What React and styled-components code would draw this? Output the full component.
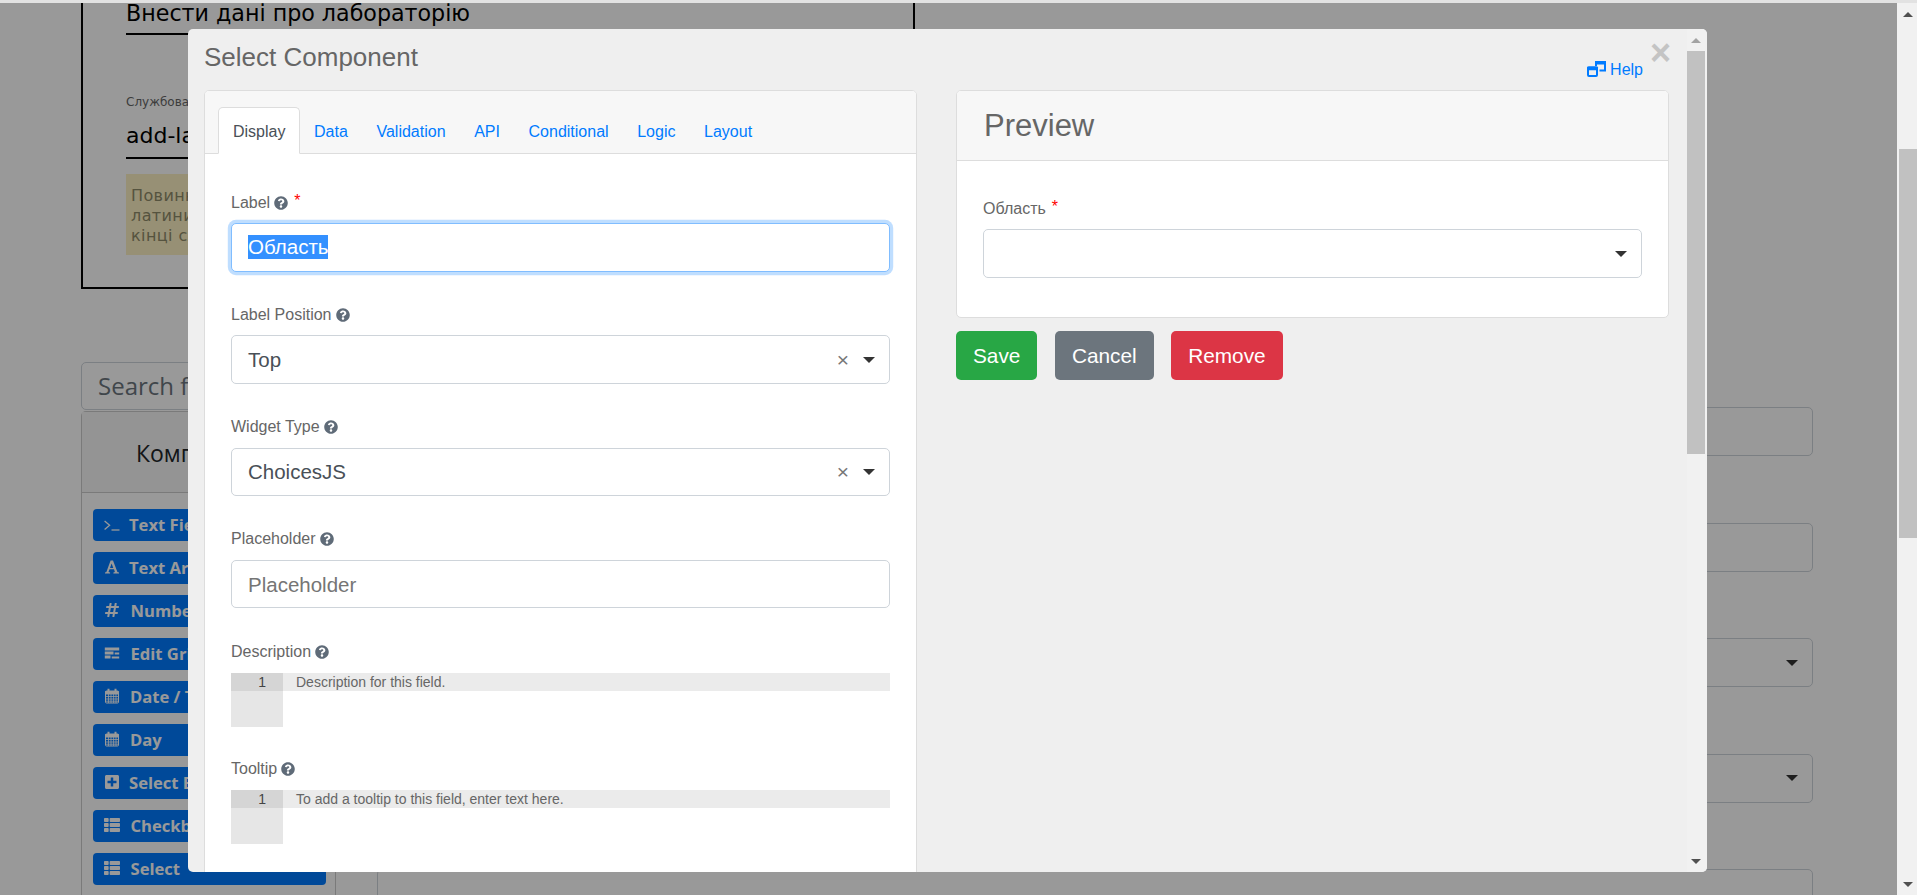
import React from 'react';
import styled, { createGlobalStyle } from 'styled-components';
import { FaHashtag, FaPlusSquare, FaThList, FaQuestionCircle } from 'react-icons/fa';

const GlobalStyle = createGlobalStyle`
  html, body {
    margin: 0;
    padding: 0;
    height: 100%;
    overflow: hidden;
  }
  body {
    font-family: "Liberation Sans", Arial, sans-serif;
    background: #fff;
  }
  * {
    box-sizing: border-box;
  }
`;

// Page shell
const Shell = styled.div`
  position: relative;
  width: 1917px;
  height: 895px;
  overflow: hidden;
  border-top: 3px solid #e2e2e2;
  display: flex;
`;

const PageArea = styled.div`
  position: relative;
  flex: 1;
  height: 100%;
  overflow: hidden;
  padding: 0 84px 0 81px;
  background: #fff;
`;

const Scrollbar = styled.div`
  width: ${props => props.$width}px;
  height: 100%;
  background: #f1f1f1;
  display: flex;
  flex-direction: column;
  align-items: stretch;
  padding-left: ${props => props.$padLeft || 0}px;
  padding-right: ${props => props.$padRight || 0}px;
  flex-shrink: 0;
`;

const ScrollArrow = styled.div`
  height: ${props => props.$space}px;
  display: flex;
  align-items: center;
  justify-content: center;
  flex-shrink: 0;
  &::after {
    content: '';
    border-left: 5px solid transparent;
    border-right: 5px solid transparent;
    ${props => props.$up ? 'border-bottom' : 'border-top'}: 5px solid ${props => props.$color};
  }
`;

const ScrollThumb = styled.div`
  height: ${props => props.$height}px;
  background: #c1c1c1;
  flex-shrink: 0;
  margin-top: ${props => props.$offset}px;
`;

const ScrollSpacer = styled.div`
  flex: 1;
`;

// Page behind the dialog
const FormCard = styled.section`
  width: 834px;
  height: 286px;
  border: 2px solid #000;
  border-top: none;
  padding-left: 43px;
  margin-bottom: 73px;
`;

const LabName = styled.div`
  font-family: "DejaVu Sans", Verdana, sans-serif;
  font-size: 22.2px;
  line-height: 20px;
  color: #000;
  height: 32px;
  border-bottom: 2px solid #000;
  width: 500px;
`;

const FieldCaption = styled.div`
  font-family: "DejaVu Sans", Verdana, sans-serif;
  font-size: 12px;
  line-height: 16px;
  color: #666;
  margin-top: 59px;
`;

const SlugInput = styled.div`
  font-family: "DejaVu Sans", Verdana, sans-serif;
  font-size: 22px;
  line-height: 32px;
  color: #000;
  height: 49px;
  padding-top: 10px;
  border-bottom: 2px solid #000;
  width: 500px;
`;

const Hint = styled.div`
  font-family: "DejaVu Sans", Verdana, sans-serif;
  font-size: 16px;
  line-height: 20px;
  letter-spacing: 0.4px;
  white-space: nowrap;
  color: #8e8a69;
  background: #fcf0c3;
  margin-top: 15px;
  padding: 12px 5px;
  width: 300px;
  height: 81px;
`;

const Builder = styled.div`
  display: grid;
  grid-template-columns: 255px 1fr;
  column-gap: 41px;
`;

const SearchBox = styled.div`
  height: 48px;
  border: 1px solid #ced4da;
  border-radius: 5px;
  font-family: "Open Sans", sans-serif;
  font-size: 24px;
  line-height: 46px;
  padding-left: 16px;
  color: #6c757d;
  margin-bottom: 1px;
  white-space: nowrap;
  overflow: hidden;
`;

const SideCard = styled.div`
  border: 1px solid #ccc;
  border-bottom: none;
  border-radius: 5px 5px 0 0;
  height: 500px;
`;

const SideHeader = styled.div`
  height: 81px;
  background: #f7f7f7;
  border-bottom: 1px solid #ccc;
  font-family: "Open Sans", sans-serif;
  font-size: 23px;
  line-height: 82px;
  padding-left: 54px;
  color: #212529;
`;

const SideList = styled.div`
  display: flex;
  flex-direction: column;
  gap: 11px;
  padding: 16px 9px 0 11px;
`;

const SideButton = styled.div`
  height: 32px;
  background: #007bff;
  color: #fff;
  border-radius: 4px;
  display: flex;
  align-items: center;
  padding: 0 0 2px 11px;
  font-family: "Open Sans", sans-serif;
  font-weight: 700;
  font-size: 16.6px;
  white-space: nowrap;
`;

const IconSlot = styled.span`
  width: ${props => props.$width}px;
  flex-shrink: 0;
  display: flex;
  align-items: center;
  svg {
    width: 16px;
    height: 16px;
    display: block;
  }
`;

const FieldColumn = styled.div`
  display: flex;
  flex-direction: column;
  gap: 66.5px;
  padding-top: 45px;
`;

const PageInput = styled.div`
  position: relative;
  height: 49px;
  flex-shrink: 0;
  border: 1px solid #ced4da;
  border-radius: 5px;
  display: flex;
  align-items: center;
  justify-content: flex-end;
  padding-right: 14px;
`;

const Caret = styled.span`
  display: inline-block;
  border-left: 6.5px solid transparent;
  border-right: 6.5px solid transparent;
  border-top: 6.5px solid #333;
`;

// Dialog
const Backdrop = styled.div`
  position: absolute;
  inset: 0;
  background: rgba(0, 0, 0, 0.4);
`;

const Modal = styled.div`
  position: absolute;
  left: 188px;
  top: 26px;
  width: 1519px;
  height: 843px;
  background: #efefef;
  border-radius: 5px;
  overflow: hidden;
  display: flex;
`;

const ModalContent = styled.div`
  flex: 1;
  min-width: 0;
  padding: 0 18px 0 16px;
  overflow: hidden;
`;

const ModalHeader = styled.div`
  height: 61px;
  position: relative;
`;

const ModalTitle = styled.h4`
  margin: 0;
  font-size: 26px;
  font-weight: 400;
  line-height: 36px;
  padding-top: 10px;
  color: #666;
`;

const HelpLink = styled.a`
  position: absolute;
  right: 26px;
  top: 29px;
  display: flex;
  align-items: center;
  gap: 4px;
  font-size: 16px;
  line-height: 24px;
  color: #007bff;
  text-decoration: none;
  svg {
    width: 19px;
    height: 16px;
    margin-top: -2px;
  }
`;

const CloseButton = styled.span`
  position: absolute;
  right: -2px;
  top: 6px;
  font-size: 36px;
  font-weight: 700;
  line-height: 36px;
  color: #c4c4c4;
`;

const Columns = styled.div`
  display: grid;
  grid-template-columns: 713px 713px;
  column-gap: 39px;
  align-items: start;
`;

const Panel = styled.div`
  background: #fff;
  border: 1px solid #ddd;
  border-radius: 5px;
  overflow: hidden;
`;

const TabBar = styled.div`
  height: 63px;
  background: #f7f7f7;
  border-bottom: 1px solid #ddd;
  display: flex;
  align-items: flex-end;
  padding-left: 13px;
`;

const Tab = styled.a`
  height: 47px;
  margin-bottom: -1px;
  padding: 2px 13.3px 0 ${props => props.$active ? 14 : 13.3}px;
  display: flex;
  align-items: center;
  font-size: 16px;
  color: ${props => props.$active ? '#495057' : '#007bff'};
  background: ${props => props.$active ? '#fff' : 'transparent'};
  border: 1px solid ${props => props.$active ? '#ddd' : 'transparent'};
  border-bottom-color: ${props => props.$active ? '#fff' : 'transparent'};
  border-radius: 5px 5px 0 0;
`;

const PanelBody = styled.div`
  padding: 36px 26px 0;
  height: 800px;
`;

const FieldGroup = styled.div`
  margin-bottom: ${props => props.$mb || 30.83}px;
`;

const Label = styled.label`
  display: flex;
  align-items: center;
  gap: 4px;
  height: 24px;
  padding-top: 1px;
  margin-bottom: ${props => props.$gap || 9}px;
  font-size: 16px;
  line-height: 24px;
  color: #666;
`;

const Required = styled.span`
  color: #f00;
  font-size: 16px;
  margin-left: 2px;
  margin-top: -3px;
`;

const HelpIcon = styled(FaQuestionCircle)`
  width: 14px;
  height: 14px;
  color: #5f6b78;
`;

const TextBox = styled.div`
  height: 48.5px;
  border: 1px solid ${props => props.$focused ? '#80bdff' : '#ced4da'};
  border-radius: 5px;
  background: #fff;
  padding: ${props => props.$focused ? 0 : 1}px 14px 0 16px;
  display: flex;
  align-items: center;
  font-size: 20.5px;
  color: ${props => props.$muted ? '#757575' : '#495057'};
  ${props => props.$focused ? 'box-shadow: 0 0 0 3.2px rgba(0, 123, 255, 0.25);' : ''}
`;

const SelectedText = styled.span`
  background: #3390ff;
  color: #fff;
  line-height: 24px;
`;

const SelectValue = styled.span`
  flex: 1;
`;

const ClearMark = styled.span`
  font-size: 21px;
  color: #777;
  margin-right: 14px;
`;

const Editor = styled.div`
  display: flex;
  height: 54px;
  background: #fff;
  font-size: 14px;
  line-height: 18px;
  color: #666;
`;

const Gutter = styled.div`
  width: 52px;
  background: #e6e6e6;
`;

const GutterLine = styled.div`
  height: 18px;
  background: #d5d5d5;
  color: #444;
  padding-right: 17px;
  text-align: right;
`;

const EditorLine = styled.div`
  flex: 1;
  height: 18px;
  background: #ebebeb;
  padding-left: 13px;
`;

const PreviewHeader = styled.div`
  height: 70px;
  background: #f7f7f7;
  border-bottom: 1px solid #ddd;
  padding-left: 27px;
  font-size: 31px;
  line-height: 70px;
  color: #666;
`;

const PreviewBody = styled.div`
  padding: 35px 26px 39.5px;
`;

const ButtonRow = styled.div`
  display: flex;
  gap: 17.5px;
  margin-top: 13px;
`;

const ActionButton = styled.button`
  height: 49px;
  border: none;
  border-radius: 5px;
  padding: 0 17px;
  background: ${props => props.$color};
  color: #fff;
  font-family: inherit;
  font-size: 20.8px;
`;

// Icons the packages have no close match for
const WindowRestoreIcon = () => (
  <svg viewBox="0 0 19 16" fill="currentColor">
    <path d="M9 5V1h9v8.5h-5.5" fill="none" stroke="currentColor" strokeWidth="2" />
    <rect x="8" y="0" width="11" height="3.4" rx="1" />
    <rect x="1" y="6.5" width="9" height="8.5" rx="1" fill="none" stroke="currentColor" strokeWidth="2" />
    <rect x="0" y="5.5" width="11" height="3.8" rx="1" />
  </svg>
);

const TerminalIcon = () => (
  <svg viewBox="0 0 16 16" fill="none" stroke="currentColor" strokeWidth="1.3">
    <path d="M0.6 5l5 4.3-5 4.3" />
    <path d="M7.5 14h8" />
  </svg>
);

const FontIcon = () => (
  <svg viewBox="0 0 16 16" fill="currentColor" fillRule="evenodd">
    <path d="M6.6 1.5h2.4l4.4 11.5 1.6.4v1h-5.6v-1l1.5-.4-.9-2.7H5.5l-1 2.7 1.6.4v1H1v-1l1.4-.4zM7.6 4.4L6 9.1h3.3z" />
  </svg>
);

const TasksIcon = () => (
  <svg viewBox="0 0 16 16" fill="currentColor">
    <path d="M0.8 2.5h14.4v3h-14.4z" />
    <path d="M0.8 6.5h8.7v3h-8.7zM10.7 7.5h4.5v2h-4.5z" />
    <path d="M0.8 10.5h5.7v3h-5.7zM7.7 11.5h7.5v2h-7.5z" />
  </svg>
);

const CalendarIcon = () => (
  <svg viewBox="0 0 16 16" fill="none" stroke="currentColor" strokeWidth="1">
    <rect x="1.5" y="3" width="13" height="12" rx="1" />
    <path d="M1.5 3.5h13v2.5h-13z" fill="currentColor" />
    <path d="M1.5 8.5h13M1.5 11h13M1.5 13.2h13M4.5 6v9M7 6v9M9.6 6v9M12 6v9" strokeWidth="0.8" />
    <path d="M4.5 0.8v3M11.5 0.8v3" strokeWidth="2" />
  </svg>
);

const sideItems = [
  { icon: TerminalIcon, label: 'Text Field', slot: 25 },
  { icon: FontIcon, label: 'Text Area', slot: 25 },
  { icon: FaHashtag, label: 'Number', slot: 26.5 },
  { icon: TasksIcon, label: 'Edit Grid', slot: 26.5 },
  { icon: CalendarIcon, label: 'Date / Time', slot: 26 },
  { icon: CalendarIcon, label: 'Day', slot: 26 },
  { icon: FaPlusSquare, label: 'Select Boxes', slot: 25 },
  { icon: FaThList, label: 'Checkbox', slot: 26.5 },
  { icon: FaThList, label: 'Select', slot: 26.5 },
];

const tabs = ['Display', 'Data', 'Validation', 'API', 'Conditional', 'Logic', 'Layout'];

const App = () => (
  <>
    <GlobalStyle />
    <Shell>
      <PageArea>
        <FormCard>
          <LabName>Внести дані про лабораторію</LabName>
          <FieldCaption>Службова назва</FieldCaption>
          <SlugInput>add-laboratory</SlugInput>
          <Hint>
            Повинна містити лише символи<br />
            латиниці, без пробілів, а в<br />
            кінці слова
          </Hint>
        </FormCard>
        <Builder>
          <div>
            <SearchBox>Search field(s)</SearchBox>
            <SideCard>
              <SideHeader>Компоненти</SideHeader>
              <SideList>
                {sideItems.map(({ icon: Icon, label, slot }) => (
                  <SideButton key={label}>
                    <IconSlot $width={slot}><Icon /></IconSlot>
                    {label}
                  </SideButton>
                ))}
              </SideList>
            </SideCard>
          </div>
          <FieldColumn>
            <PageInput />
            <PageInput />
            <PageInput><Caret /></PageInput>
            <PageInput><Caret /></PageInput>
            <PageInput />
          </FieldColumn>
        </Builder>
        <Backdrop />
        <Modal>
          <ModalContent>
            <ModalHeader>
              <ModalTitle>Select Component</ModalTitle>
              <HelpLink><WindowRestoreIcon />Help</HelpLink>
              <CloseButton>×</CloseButton>
            </ModalHeader>
            <Columns>
              <Panel>
                <TabBar>
                  {tabs.map(tab => (
                    <Tab key={tab} $active={tab === 'Display'}>{tab}</Tab>
                  ))}
                </TabBar>
                <PanelBody>
                  <FieldGroup>
                    <Label>Label <HelpIcon /><Required>*</Required></Label>
                    <TextBox $focused><SelectedText>Область</SelectedText></TextBox>
                  </FieldGroup>
                  <FieldGroup>
                    <Label>Label Position <HelpIcon /></Label>
                    <TextBox>
                      <SelectValue>Top</SelectValue>
                      <ClearMark>×</ClearMark>
                      <Caret />
                    </TextBox>
                  </FieldGroup>
                  <FieldGroup>
                    <Label>Widget Type <HelpIcon /></Label>
                    <TextBox>
                      <SelectValue>ChoicesJS</SelectValue>
                      <ClearMark>×</ClearMark>
                      <Caret />
                    </TextBox>
                  </FieldGroup>
                  <FieldGroup>
                    <Label>Placeholder <HelpIcon /></Label>
                    <TextBox $muted>Placeholder</TextBox>
                  </FieldGroup>
                  <FieldGroup $mb={29.67}>
                    <Label $gap={10}>Description <HelpIcon /></Label>
                    <Editor>
                      <Gutter><GutterLine>1</GutterLine></Gutter>
                      <EditorLine>Description for this field.</EditorLine>
                    </Editor>
                  </FieldGroup>
                  <FieldGroup>
                    <Label>Tooltip <HelpIcon /></Label>
                    <Editor>
                      <Gutter><GutterLine>1</GutterLine></Gutter>
                      <EditorLine>To add a tooltip to this field, enter text here.</EditorLine>
                    </Editor>
                  </FieldGroup>
                </PanelBody>
              </Panel>
              <div>
                <Panel>
                  <PreviewHeader>Preview</PreviewHeader>
                  <PreviewBody>
                    <Label>Область <Required>*</Required></Label>
                    <TextBox>
                      <SelectValue />
                      <Caret />
                    </TextBox>
                  </PreviewBody>
                </Panel>
                <ButtonRow>
                  <ActionButton $color="#28a745">Save</ActionButton>
                  <ActionButton $color="#6c757d">Cancel</ActionButton>
                  <ActionButton $color="#dc3545">Remove</ActionButton>
                </ButtonRow>
              </div>
            </Columns>
          </ModalContent>
          <Scrollbar $width={20} $padRight={2}>
            <ScrollArrow $up $space={22} $color="#a3a3a3" />
            <ScrollThumb $offset={0} $height={403} />
            <ScrollSpacer />
            <ScrollArrow $space={22} $color="#505050" />
          </Scrollbar>
        </Modal>
      </PageArea>
      <Scrollbar $width={20} $padLeft={2}>
        <ScrollArrow $up $space={22} $color="#505050" />
        <ScrollThumb $offset={124} $height={389} />
        <ScrollSpacer />
        <ScrollArrow $space={22} $color="#505050" />
      </Scrollbar>
    </Shell>
  </>
);

export default App;
